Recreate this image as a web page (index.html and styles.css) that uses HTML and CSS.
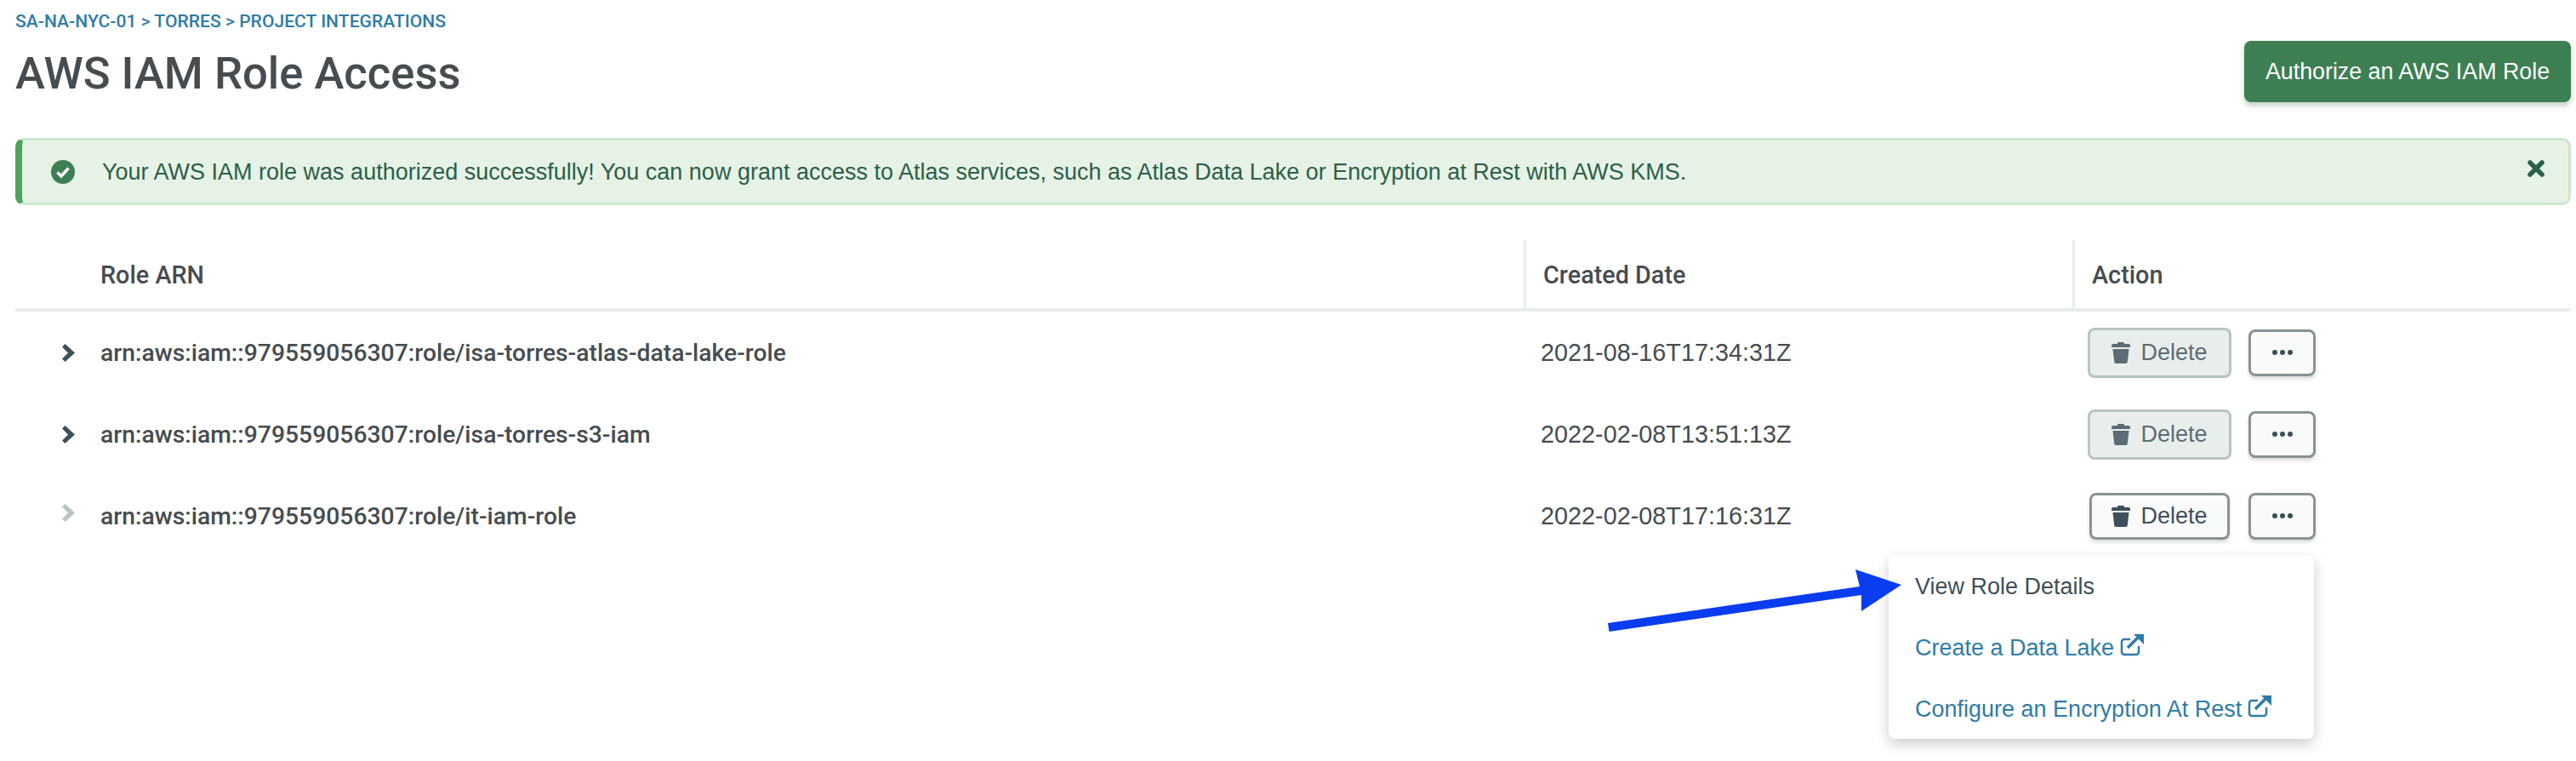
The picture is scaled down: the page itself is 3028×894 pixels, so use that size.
FILE: index.html
```html
<!DOCTYPE html>
<html lang="en">
<head>
<meta charset="utf-8">
<title>AWS IAM Role Access</title>
<link rel="stylesheet" href="styles.css">
</head>
<body>
<svg width="0" height="0" class="defs">
  <symbol id="trash" viewBox="0 0 22 25"><path d="M8 0h6a1 1 0 0 1 1 1v1h5a2 2 0 0 1 2 2v2H0V4a2 2 0 0 1 2-2h5V1a1 1 0 0 1 1-1zM1.500 8h19l-1.700 15a2 2 0 0 1-2 2H5.200a2 2 0 0 1-2-2z"/></symbol>
  <symbol id="chev" viewBox="0 0 15 21"><path d="M3.500 0 15 10.500 3.500 21 0 17.500l7-7-7-7z"/></symbol>
  <symbol id="ext" viewBox="0 0 28 26"><path d="M12 6H5a3 3 0 0 0-3 3v12a3 3 0 0 0 3 3h14a3 3 0 0 0 3-3v-7" fill="none" stroke="currentColor" stroke-width="2.500"/><path d="M9 16 21 4" fill="none" stroke="currentColor" stroke-width="3.500"/><path d="M16 0h12v12z"/></symbol>
</svg>
<main class="page">
  <nav class="crumbs">SA-NA-NYC-01 &gt; TORRES &gt; PROJECT INTEGRATIONS</nav>
  <header class="head">
    <h1 class="title">AWS IAM Role Access</h1>
    <button class="primary">Authorize an AWS IAM Role</button>
  </header>
  <section class="alert">
    <svg class="alert-icon" viewBox="0 0 28 28"><circle cx="14" cy="14" r="14" fill="#3d7f53"/><path d="M7.500 14.500 12 19l8.500-9.500" fill="none" stroke="#fff" stroke-width="3.600"/></svg>
    <p class="alert-text">Your AWS IAM role was authorized successfully! You can now grant access to Atlas services, such as Atlas Data Lake or Encryption at Rest with AWS KMS.</p>
    <svg class="alert-x" viewBox="0 0 20 20"><path d="M3 3 17 17M17 3 3 17" stroke="#2b6048" stroke-width="5.500" stroke-linecap="round"/></svg>
  </section>
  <section class="table">
    <div class="th first">Role ARN</div>
    <div class="th">Created Date</div>
    <div class="th">Action</div>

    <div class="td arn"><svg class="chev"><use href="#chev"/></svg>arn:aws:iam::979559056307:role/isa-torres-atlas-data-lake-role</div>
    <div class="td date">2021-08-16T17:34:31Z</div>
    <div class="td actions">
      <button class="btn del off"><svg class="trash"><use href="#trash"/></svg>Delete</button>
      <button class="btn more"><i></i><i></i><i></i></button>
    </div>

    <div class="td arn"><svg class="chev"><use href="#chev"/></svg>arn:aws:iam::979559056307:role/isa-torres-s3-iam</div>
    <div class="td date">2022-02-08T13:51:13Z</div>
    <div class="td actions">
      <button class="btn del off"><svg class="trash"><use href="#trash"/></svg>Delete</button>
      <button class="btn more"><i></i><i></i><i></i></button>
    </div>

    <div class="td arn"><svg class="chev dim"><use href="#chev"/></svg>arn:aws:iam::979559056307:role/it-iam-role</div>
    <div class="td date">2022-02-08T17:16:31Z</div>
    <div class="td actions anchor">
      <button class="btn del on"><svg class="trash"><use href="#trash"/></svg>Delete</button>
      <button class="btn more"><i></i><i></i><i></i></button>
      <div class="menu">
        <div class="item">View Role Details</div>
        <div class="item link">Create a Data Lake<svg class="ext"><use href="#ext"/></svg></div>
        <div class="item link">Configure an Encryption At Rest<svg class="ext"><use href="#ext"/></svg></div>
      </div>
    </div>
  </section>
  <svg class="arrow" viewBox="0 0 350 74"><path d="M0 63 296 20 291 0 345 18 298 49 298 30 1.500 73z" fill="#0a3cf0"/></svg>
</main>
</body>
</html>
```

FILE: styles.css
```css
* { box-sizing: border-box; }
html, body { margin: 0; padding: 0; background: #fff; }
body { font-family: "Liberation Sans", Arial, sans-serif; color: #464c4f; height: 894px; overflow: hidden; }
.defs { position: absolute; }
.page { position: relative; padding: 14px 6px 0 18px; }

.crumbs { height: 22px; line-height: 22px; font-family: Roboto, sans-serif; font-size: 21.100px; font-weight: 500; color: #2e7ca8; }

.head { display: flex; justify-content: space-between; align-items: center; margin-top: 12px; height: 72px; }
.title { margin: 0 0 -4px; font-family: Roboto, sans-serif; font-size: 52.600px; font-weight: 500; line-height: 60px; color: #464c4f; }
.primary { width: 384px; height: 72px; border: 0; border-radius: 8px; background: #3d7f53; color: #fff; font: 400 26.800px "Liberation Sans", Arial, sans-serif; box-shadow: 0 4px 6px rgba(61,127,83,.35); padding: 0; }

.alert { display: flex; align-items: center; margin-top: 42px; height: 79px; border: 3px solid #cde6ce; border-left: 8px solid #4fa35c; border-radius: 10px; background: #e7f2e6; color: #2b6048; padding: 0 28px 0 34px; }
.alert-icon { width: 28px; height: 28px; flex: none; }
.alert-text { margin: 0 0 0 32px; flex: 1; font-size: 27px; line-height: 32px; }
.alert-x { width: 20px; height: 20px; flex: none; margin-top: -7px; }

.table { display: grid; grid-template-columns: 1773px 645px 1fr; grid-template-rows: 84px repeat(3, 96px); margin-top: 41px; }
.th { padding-left: 20px; border-left: 3px solid #e7eeec; border-bottom: 4px solid #e7eeec; font-family: Roboto, sans-serif; font-size: 28.800px; font-weight: 500; line-height: 82px; color: #464c4f; }
.th.first { padding-left: 100px; border-left: 0; }
.td { display: flex; align-items: center; font-size: 27px; }
.arn { font-family: Roboto, sans-serif; font-size: 28.300px; font-weight: 500; padding-left: 55px; }
.date { padding-left: 20px; font-size: 28.800px; }
.actions { padding-left: 18px; gap: 20px; position: relative; }

.chev { width: 15px; height: 21px; fill: #3d4f58; margin-right: 30px; flex: none; }
.chev.dim { fill: #b8c4c2; margin-top: -8px; }

.btn { display: flex; align-items: center; justify-content: center; padding: 0; font: 400 27px "Liberation Sans", Arial, sans-serif; border-radius: 8px; }
.del { gap: 12px; }
.off { width: 169px; height: 59px; background: #e7eeec; border: 3px solid #b8c4c2; color: #5d6c74; fill: #5d6c74; }
.on { width: 165px; height: 55px; margin-left: 2px; margin-right: 2px; background: #f9fbfa; border: 3px solid #889397; color: #3d4f58; fill: #3d4f58; box-shadow: 0 3px 4px rgba(0,0,0,.15); }
.trash { width: 22px; height: 25px; flex: none; }
.more { width: 79px; height: 55px; gap: 3px; background: #f9fbfa; border: 3px solid #889397; box-shadow: 0 3px 4px rgba(0,0,0,.15); }
.more i { width: 6px; height: 6px; border-radius: 50%; background: #3d4f58; }

.menu { position: absolute; top: 94px; left: -216px; width: 500px; height: 216px; padding: 1px 0; background: #fff; border-radius: 8px; box-shadow: 0 6px 16px rgba(0,0,0,.2); display: grid; grid-auto-rows: 72px; z-index: 1; }
.item { display: flex; align-items: center; padding-left: 31px; font-size: 27px; color: #3d4f58; }
.link { color: #2e7ca8; fill: #2e7ca8; }
.ext { width: 28px; height: 26px; margin: -6px 0 0 7px; flex: none; }

.arrow { position: absolute; left: 1890px; top: 669px; width: 350px; height: 74px; overflow: visible; z-index: 2; }
```
